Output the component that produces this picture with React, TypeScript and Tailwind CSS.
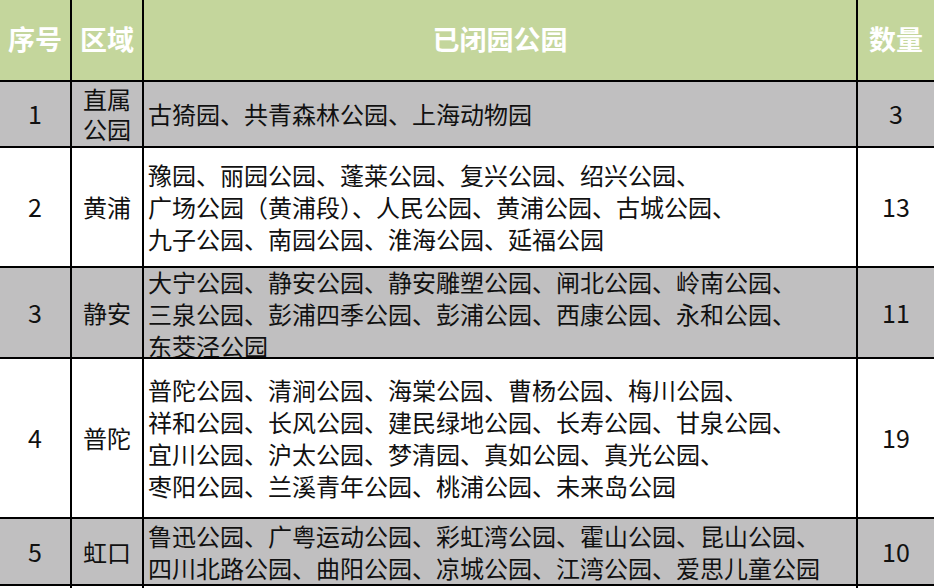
type Row = {
  no: string;
  area: string[];
  parks: string[];
  count: string;
  gray: boolean;
  top?: boolean;
  lh: string;
};

const rows: Row[] = [
  {
    no: "1",
    area: ["直属", "公园"],
    parks: ["古猗园、共青森林公园、上海动物园"],
    count: "3",
    gray: true,
    lh: "h-[64px]",
  },
  {
    no: "2",
    area: ["黄浦"],
    parks: [
      "豫园、丽园公园、蓬莱公园、复兴公园、绍兴公园、",
      "广场公园（黄浦段）、人民公园、黄浦公园、古城公园、",
      "九子公园、南园公园、淮海公园、延福公园",
    ],
    count: "13",
    gray: false,
    lh: "h-[118px]",
  },
  {
    no: "3",
    area: ["静安"],
    parks: [
      "大宁公园、静安公园、静安雕塑公园、闸北公园、岭南公园、",
      "三泉公园、彭浦四季公园、彭浦公园、西康公园、永和公园、",
      "东茭泾公园",
    ],
    count: "11",
    gray: true,
    top: true,
    lh: "h-[89px]",
  },
  {
    no: "4",
    area: ["普陀"],
    parks: [
      "普陀公园、清涧公园、海棠公园、曹杨公园、梅川公园、",
      "祥和公园、长风公园、建民绿地公园、长寿公园、甘泉公园、",
      "宜川公园、沪太公园、梦清园、真如公园、真光公园、",
      "枣阳公园、兰溪青年公园、桃浦公园、未来岛公园",
    ],
    count: "19",
    gray: false,
    lh: "h-[158px]",
  },
  {
    no: "5",
    area: ["虹口"],
    parks: [
      "鲁迅公园、广粤运动公园、彩虹湾公园、霍山公园、昆山公园、",
      "四川北路公园、曲阳公园、凉城公园、江湾公园、爱思儿童公园",
    ],
    count: "10",
    gray: true,
    lh: "h-[65px]",
  },
];

const font = "font-['Noto_Sans_CJK_SC','Noto_Sans',sans-serif]";

export default function App() {
  return (
    <div className={`h-[588px] w-[934px] overflow-hidden bg-white text-[#111] ${font}`}>
      <div className="grid grid-cols-[70px_70px_712px_1fr] gap-[2px] bg-black">
        {/* header */}
        {["序号", "区域", "已闭园公园", "数量"].map((h) => (
          <div
            key={h}
            className="flex h-[80px] items-center justify-center bg-[#c4d69c] pb-[1px] text-[27px] font-bold text-white"
          >
            {h}
          </div>
        ))}

        {rows.map((r) => {
          const bg = r.gray ? "bg-[#c0bfc0]" : "bg-white";
          return [
            <div key={r.no + "a"} className={`flex ${r.lh} items-center justify-center ${bg} text-[25px]`}>
              {r.no}
            </div>,
            <div
              key={r.no + "b"}
              className={`flex ${r.lh} flex-col items-center justify-center ${bg} text-[24px] leading-[30px]`}
            >
              {r.area.map((a) => (
                <span key={a}>{a}</span>
              ))}
            </div>,
            <div
              key={r.no + "c"}
              className={`flex ${r.lh} flex-col overflow-hidden ${r.top ? "justify-start -mt-0" : "justify-center"} ${bg} pl-[4px] text-[24px] leading-[32px] whitespace-nowrap`}
            >
              {r.parks.map((p) => (
                <span key={p} className={r.top ? "-translate-y-[2px]" : ""}>
                  {p}
                </span>
              ))}
            </div>,
            <div key={r.no + "d"} className={`flex ${r.lh} items-center justify-center ${bg} text-[25px]`}>
              {r.count}
            </div>,
          ];
        })}

        {/* partial next row */}
        <div className="h-[10px] bg-white" />
        <div className="h-[10px] bg-white" />
        <div className="h-[10px] bg-white" />
        <div className="h-[10px] bg-white" />
      </div>
    </div>
  );
}
